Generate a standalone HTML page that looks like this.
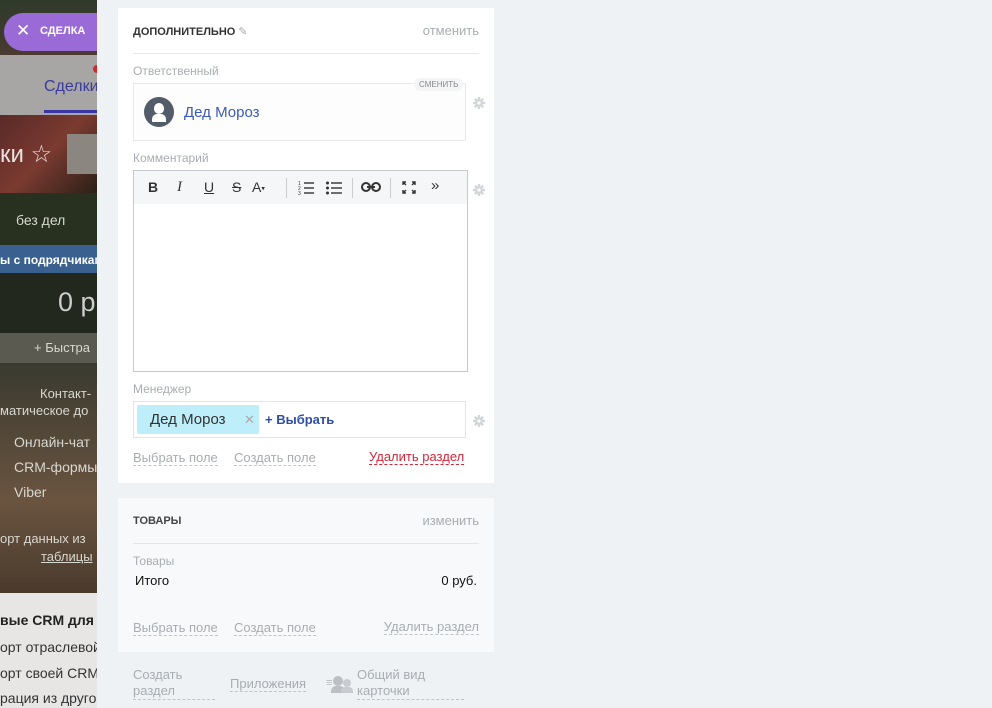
<!DOCTYPE html>
<html><head><meta charset="utf-8"><style>
*{margin:0;padding:0;box-sizing:border-box}
body{width:992px;height:708px;overflow:hidden;background:#eef2f4;font-family:"Liberation Sans",sans-serif;position:relative}
.abs{position:absolute}
.left{left:0;top:0;width:97px;height:708px;overflow:hidden;background:#2a2a22}
.lt{position:absolute;white-space:nowrap;color:#d8d8d0;font-size:13px}
.panel{position:absolute;left:118px;width:376px}
.gray{color:#a8adb2}
.dash{border-bottom:1px dashed #bfc4c8}
</style></head><body>
<svg width="0" height="0" style="position:absolute"><defs>
<g id="gear"><circle cx="6" cy="6" r="4" fill="#d3d6d9"/><g stroke="#d3d6d9" stroke-width="2.4"><line x1="6" y1="0" x2="6" y2="12"/><line x1="0" y1="6" x2="12" y2="6"/><line x1="1.8" y1="1.8" x2="10.2" y2="10.2"/><line x1="10.2" y1="1.8" x2="1.8" y2="10.2"/></g><circle cx="6" cy="6" r="1.6" fill="#fff"/></g>
</defs></svg>
<div class="abs left">
 <div class="abs" style="left:0;top:0;width:97px;height:55px;background:linear-gradient(#2f3a2a,#4a3a30)"></div>
 <div class="abs" style="left:0;top:55px;width:97px;height:60px;background:#a8a6a4"></div>
 <div class="lt" style="left:44px;top:78px;color:#3a3aa0;font-size:16px">Сделки</div>
 <div class="abs" style="left:44px;top:110px;width:53px;height:3px;background:#3b36a8"></div>
 <div class="abs" style="left:93px;top:65px;width:8px;height:8px;border-radius:50%;background:#d02a2a"></div>
 <div class="abs" style="left:0;top:115px;width:97px;height:78px;background:linear-gradient(135deg,#5a2a28,#7a3a30 50%,#2a2018)"></div>
 <div class="lt" style="left:0;top:140px;font-size:24px;color:#e8e0e0">ки ☆</div>
 <div class="abs" style="left:67px;top:134px;width:30px;height:40px;background:#8c8680"></div>
 <div class="abs" style="left:0;top:193px;width:97px;height:52px;background:#283020"></div>
 <div class="lt" style="left:16px;top:212px;font-size:14px">без дел</div>
 <div class="abs" style="left:0;top:245px;width:97px;height:28px;background:#3a6090"></div>
 <div class="lt" style="left:0;top:253px;color:#fff;font-size:12px;font-weight:bold">ы с подрядчикам</div>
 <div class="abs" style="left:0;top:273px;width:97px;height:60px;background:#22281e"></div>
 <div class="lt" style="left:58px;top:287px;font-size:27px;color:#ccc">0 р</div>
 <div class="abs" style="left:0;top:333px;width:97px;height:30px;background:#5a5a50"></div>
 <div class="lt" style="left:34px;top:340px;font-size:13px">+ Быстра</div>
 <div class="abs" style="left:0;top:363px;width:97px;height:230px;background:linear-gradient(#3a3a30,#6a5440 60%,#4a3a2c)"></div>
 <div class="lt" style="left:40px;top:386px;font-size:13px">Контакт-</div>
 <div class="lt" style="left:0;top:403px;font-size:13px">матическое до</div>
 <div class="lt" style="left:14px;top:434px;font-size:14px">Онлайн-чат</div>
 <div class="lt" style="left:14px;top:459px;font-size:14px">CRM-формы</div>
 <div class="lt" style="left:14px;top:484px;font-size:14px">Viber</div>
 <div class="lt" style="left:0;top:531px;font-size:13px">орт данных из</div>
 <div class="lt" style="left:41px;top:549px;text-decoration:underline;font-size:13px">таблицы</div>
 <div class="abs" style="left:0;top:593px;width:97px;height:115px;background:#e8e6e4"></div>
 <div class="lt" style="left:0;top:612px;color:#222;font-weight:bold;font-size:14px">вые CRM для</div>
 <div class="lt" style="left:0;top:639px;color:#333;font-size:14px">орт отраслевой</div>
 <div class="lt" style="left:0;top:665px;color:#333;font-size:14px">орт своей CRM</div>
 <div class="lt" style="left:0;top:690px;color:#333;font-size:14px">рация из другой</div>
 <div class="abs" style="left:4px;top:13px;width:93px;height:38px;border-radius:19px 0 0 19px;background:#9a6bd6"></div>
 <div class="lt" style="left:16px;top:21px;color:#fff;font-size:17px">✕</div>
 <div class="lt" style="left:40px;top:25px;color:#fff;font-size:11px;font-weight:bold">СДЕЛКА</div>
</div>

<div class="panel" style="top:8px;height:475px;background:#fff">
 <div class="abs" style="left:15px;top:17px;font-size:11px;font-weight:bold;color:#333">ДОПОЛНИТЕЛЬНО <span style="color:#aaa;font-weight:normal">✎</span></div>
 <div class="abs gray" style="right:15px;top:15px;font-size:13px">отменить</div>
 <div class="abs" style="left:15px;top:45px;width:346px;height:1px;background:#e6e9eb"></div>
 <div class="abs gray" style="left:15px;top:56px;font-size:12px">Ответственный</div>
 <div class="abs" style="left:15px;top:75px;width:333px;height:58px;border:1px solid #e8eaec;background:#fdfdfd"></div>
 <div class="abs" style="left:296px;top:70px;font-size:8px;color:#888;background:#f4f5f6;padding:2px 5px;border-radius:6px">СМЕНИТЬ</div>
 <div class="abs" style="left:26px;top:89px;width:30px;height:30px;border-radius:50%;background:#535c69;overflow:hidden">
  <div class="abs" style="left:10px;top:6px;width:10px;height:11px;border-radius:5px;background:#fff"></div>
  <div class="abs" style="left:8px;top:17px;width:14px;height:8px;border-radius:5px 5px 0 0;background:#fff"></div>
 </div>
 <div class="abs" style="left:66px;top:96px;font-size:15px;color:#3b5bb5">Дед Мороз</div>
 <svg class="abs" style="left:355px;top:89px" width="12" height="12"><use href="#gear"/></svg>
 <div class="abs gray" style="left:15px;top:143px;font-size:12px">Комментарий</div>
 <div class="abs" style="left:15px;top:162px;width:335px;height:202px;border:1px solid #c6cace;background:#fff">
  <div style="height:33px;background:#f5f6f8;font-size:14px;color:#333;position:relative">
   <span class="abs" style="left:14px;top:8px;font-weight:bold">B</span>
   <span class="abs" style="left:43px;top:8px;font-style:italic;font-family:'Liberation Serif',serif;font-size:15px">I</span>
   <span class="abs" style="left:70px;top:8px;text-decoration:underline">U</span>
   <span class="abs" style="left:98px;top:8px;text-decoration:line-through">S</span>
   <span class="abs" style="left:118px;top:8px">A<span style="font-size:7px;vertical-align:middle">▾</span></span>
   <span class="abs" style="left:152px;top:7px;width:1px;height:20px;background:#ccc"></span>
   <svg class="abs" style="left:164px;top:9px" width="16" height="15" stroke="#333" stroke-width="1.4"><line x1="6" y1="3" x2="16" y2="3"/><line x1="6" y1="8" x2="16" y2="8"/><line x1="6" y1="13" x2="16" y2="13"/><text x="0" y="5" font-size="5" fill="#333" stroke="none">1</text><text x="0" y="10" font-size="5" fill="#333" stroke="none">2</text><text x="0" y="15" font-size="5" fill="#333" stroke="none">3</text></svg>
   <svg class="abs" style="left:192px;top:9px" width="16" height="15" stroke="#333" stroke-width="1.4"><line x1="5" y1="3" x2="16" y2="3"/><line x1="5" y1="8" x2="16" y2="8"/><line x1="5" y1="13" x2="16" y2="13"/><g fill="#333" stroke="none"><circle cx="1.5" cy="3" r="1.5"/><circle cx="1.5" cy="8" r="1.5"/><circle cx="1.5" cy="13" r="1.5"/></g></svg>
   <span class="abs" style="left:218px;top:7px;width:1px;height:20px;background:#ccc"></span>
   <svg class="abs" style="left:227px;top:11px" width="20" height="10" fill="none" stroke="#333" stroke-width="2"><rect x="1" y="1" width="8" height="8" rx="4"/><rect x="11" y="1" width="8" height="8" rx="4"/><line x1="6" y1="5" x2="14" y2="5"/></svg>
   <span class="abs" style="left:256px;top:7px;width:1px;height:20px;background:#ccc"></span>
   <svg class="abs" style="left:268px;top:10px" width="14" height="13" fill="none" stroke="#333" stroke-width="1.4"><path d="M1 4V1h3M10 1h3v3M1 9v3h3M13 9v3h-3M1 1l3 3M13 1l-3 3M1 12l3-3M13 12l-3-3"/></svg>
   <span class="abs" style="left:297px;top:6px;font-size:15px">»</span>
  </div>
 </div>
 <svg class="abs" style="left:355px;top:176px" width="12" height="12"><use href="#gear"/></svg>
 <div class="abs gray" style="left:15px;top:374px;font-size:12px">Менеджер</div>
 <div class="abs" style="left:15px;top:393px;width:333px;height:37px;border:1px solid #e2e5e8"></div>
 <div class="abs" style="left:19px;top:397px;width:122px;height:29px;background:#bdeefa;border-radius:2px"></div>
 <div class="abs" style="left:32px;top:403px;font-size:15px;color:#333">Дед Мороз</div>
 <div class="abs" style="left:126px;top:404px;font-size:13px;color:#aaa">✕</div>
 <div class="abs" style="left:147px;top:404px;font-size:13px;color:#2d4da8;font-weight:bold">+ Выбрать</div>
 <svg class="abs" style="left:355px;top:407px" width="12" height="12"><use href="#gear"/></svg>
 <div class="abs gray dash" style="left:15px;top:442px;font-size:13px">Выбрать поле</div>
 <div class="abs gray dash" style="left:116px;top:442px;font-size:13px">Создать поле</div>
 <div class="abs" style="left:251px;top:441px;font-size:13px;color:#d4253a;border-bottom:1px dashed #d4253a">Удалить раздел</div>
</div>

<div class="panel" style="top:498px;height:154px;background:#f8f9fa">
 <div class="abs" style="left:15px;top:17px;font-size:11px;font-weight:bold;color:#444">ТОВАРЫ</div>
 <div class="abs gray" style="right:15px;top:15px;font-size:13px">изменить</div>
 <div class="abs" style="left:15px;top:45px;width:346px;height:1px;background:#e3e6e9"></div>
 <div class="abs gray" style="left:15px;top:56px;font-size:12px">Товары</div>
 <div class="abs" style="left:17px;top:75px;font-size:13px;color:#111">Итого</div>
 <div class="abs" style="right:17px;top:75px;font-size:13px;color:#111">0 руб.</div>
 <div class="abs gray dash" style="left:15px;top:122px;font-size:13px">Выбрать поле</div>
 <div class="abs gray dash" style="left:116px;top:122px;font-size:13px">Создать поле</div>
 <div class="abs gray dash" style="right:15px;top:121px;font-size:13px">Удалить раздел</div>
</div>

<div class="abs gray dash" style="left:133px;top:667px;width:82px;font-size:13px;line-height:16px">Создать<br>раздел</div>
<div class="abs gray dash" style="left:230px;top:676px;font-size:13px">Приложения</div>
<div class="abs" style="left:326px;top:677px;font-size:11px;color:#bbb">≡</div>
<div class="abs" style="left:333px;top:676px;width:10px;height:10px;border-radius:50%;background:#bcc0c4"></div>
<div class="abs" style="left:331px;top:686px;width:14px;height:7px;border-radius:5px 5px 0 0;background:#bcc0c4"></div>
<div class="abs" style="left:343px;top:679px;width:8px;height:8px;border-radius:50%;background:#c8ccd0"></div>
<div class="abs" style="left:341px;top:687px;width:12px;height:6px;border-radius:4px 4px 0 0;background:#c8ccd0"></div>
<div class="abs gray dash" style="left:357px;top:667px;width:107px;font-size:13px;line-height:16px">Общий вид<br>карточки</div>
</body></html>
